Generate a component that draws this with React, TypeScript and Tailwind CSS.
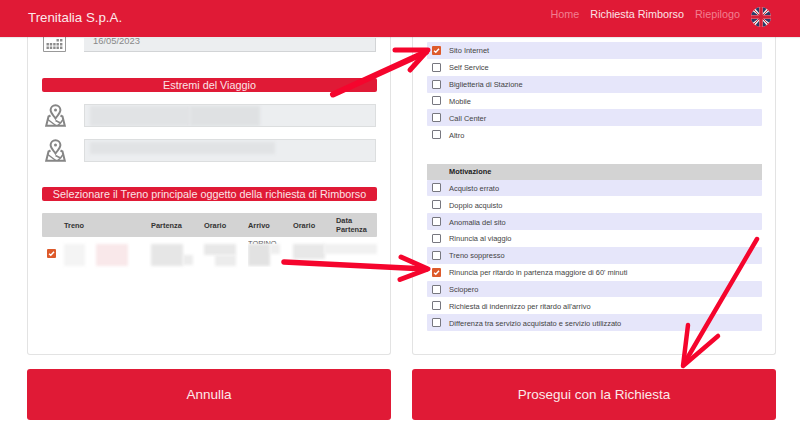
const channels = [
  { label: 'Sito Internet', checked: true },
  { label: 'Self Service' },
  { label: 'Biglietteria di Stazione' },
  { label: 'Mobile' },
  { label: 'Call Center' },
  { label: 'Altro' },
];

const reasons = [
  { label: 'Acquisto errato' },
  { label: 'Doppio acquisto' },
  { label: 'Anomalia del sito' },
  { label: 'Rinuncia al viaggio' },
  { label: 'Treno soppresso' },
  { label: "Rinuncia per ritardo in partenza maggiore di 60' minuti", checked: true },
  { label: 'Sciopero' },
  { label: "Richiesta di indennizzo per ritardo all'arrivo" },
  { label: 'Differenza tra servizio acquistato e servizio utilizzato' },
];

const Check = ({ checked }: { checked?: boolean }) =>
  checked ? (
    <span className="flex h-[9px] w-[9px] items-center justify-center rounded-[1px] bg-[#dd5a2b]">
      <svg viewBox="0 0 10 10" className="h-[7px] w-[7px]">
        <path d="M1.5 5.2 4 7.6 8.6 2.4" fill="none" stroke="#fff" strokeWidth="2" />
      </svg>
    </span>
  ) : (
    <span className="h-[9px] w-[9px] rounded-[1px] border border-[#77777f] bg-white" />
  );

const Row = ({ label, checked, odd }: { label: string; checked?: boolean; odd: boolean }) => (
  <div className={`flex h-[16.85px] items-center pl-[5px] ${odd ? 'rounded-[1px] bg-[#e6e6fa]' : ''}`}>
    <Check checked={checked} />
    <span className="ml-[8px] mt-[1px] text-[7.45px] text-[#444]">{label}</span>
  </div>
);

const Bar = ({ children }: { children: string }) => (
  <div className="flex h-[14px] items-center justify-center rounded-[2px] bg-[#e01a36] text-[10.8px] text-[#fbe3e6]">
    {children}
  </div>
);

const PinIcon = () => (
  <svg viewBox="0 0 21 23" className="h-[23px] w-[21px] shrink-0" fill="none" stroke="#868686" strokeWidth="2">
    <path d="M10.5 1.2a4.9 4.9 0 0 1 4.9 4.9c0 2.8-3 5.6-4.9 8.4-1.9-2.8-4.9-5.6-4.9-8.4a4.9 4.9 0 0 1 4.9-4.9Z" />
    <circle cx="10.5" cy="6" r="1.5" fill="#868686" stroke="none" />
    <path d="M5.5 11.5 3.5 12.5 1.2 21.8h18.6L17.5 12.5 15.5 11.5" />
    <path d="M2.8 15.5l8 6M10.5 16.5l5 2.5-3 2.8M18 15.5l-2.5 3.5" strokeWidth="1.5" />
  </svg>
);

const CalendarIcon = () => (
  <svg viewBox="0 0 23 15" className="h-[15px] w-[23px] shrink-0">
    <path d="M.5 0v14.5h22V0" fill="none" stroke="#999" />
    <path
      d="M13.5 2h2.4v2.4h-2.4zM17 2h2.4v2.4H17zM3.5 6h2.4v2.4H3.5zM6.8 6h2.4v2.4H6.8zM10.2 6h2.4v2.4h-2.4zM13.5 6h2.4v2.4h-2.4zM17 6h2.4v2.4H17zM3.5 9.6h2.4V12H3.5zM6.8 9.6h2.4V12H6.8zM10.2 9.6h2.4V12h-2.4zM13.5 9.6h2.4V12h-2.4zM17 9.6h2.4V12H17z"
      fill="#8c8c8c"
    />
  </svg>
);

const Flag = () => (
  <svg viewBox="0 0 20 20" className="h-[20px] w-[20px]">
    <clipPath id="flag-circle">
      <circle cx="10" cy="10" r="10" />
    </clipPath>
    <g clipPath="url(#flag-circle)">
      <rect width="20" height="20" fill="#eee" />
      <path d="M0 3 7 8H0zM3 0l5 6V0zM20 3l-7 5h7zM17 0l-5 6V0zM0 17l7-5H0zM3 20l5-6v6zM20 17l-7-5h7zM17 20l-5-6v6z" fill="#2b3a67" />
      <path d="M0 0l20 20M20 0 0 20" stroke="#c8283c" strokeWidth="1" />
      <path d="M10 0v20M0 10h20" stroke="#d31f37" strokeWidth="3.5" />
    </g>
  </svg>
);

const Blurred = ({ className }: { className: string }) => <div className={`blur-[1.5px] ${className}`} />;

export default function App() {
  return (
    <div className="relative flex h-[439px] w-[800px] flex-col overflow-hidden bg-white font-['Liberation_Sans',Arial,sans-serif]">
      <header className="z-10 flex h-[37px] shrink-0 bg-[#e01a36] pl-[28px] pr-[29px] shadow-[0_1px_1px_rgba(0,0,0,0.08)]">
        <span className="mt-[10px] text-[13.3px] leading-[16px] text-[#fbe9eb]">Trenitalia S.p.A.</span>
        <nav className="ml-auto mt-[7px] flex h-[14px] items-start gap-[11px] text-[10.8px] leading-[14px]">
          <span className="text-[#f27f90]">Home</span>
          <span className="text-[#fbe3e6]">Richiesta Rimborso</span>
          <span className="text-[#f27f90]">Riepilogo</span>
          <Flag />
        </nav>
      </header>

      <main className="grid h-[318px] shrink-0 grid-cols-[364px_364px] gap-[21px] pl-[27px]">
        <section className="overflow-hidden rounded-b-[3px] border border-t-0 border-[#e3e3e3] pl-[14px] pr-[13px]">
          <div className="flex h-[15px] items-end gap-[18px] pl-[1px]">
            <CalendarIcon />
            <div className="flex h-[14px] w-[292px] items-start overflow-hidden border-b border-r border-[#d2d4d6] bg-[#eceef0] pl-[9px] text-[9.4px] leading-none text-[#888]">
              <span className="-mt-[2px]">16/05/2023</span>
            </div>
          </div>

          <div className="mt-[26px]">
            <Bar>Estremi del Viaggio</Bar>
          </div>

          <div className="mt-[12px] flex items-center gap-[18px] pl-[3px]">
            <PinIcon />
            <div className="relative h-[23px] w-[292px] overflow-hidden border border-[#dcdedf] bg-[#eceef0]">
              <Blurred className="absolute left-[5px] top-[1px] h-[20px] w-[100px] bg-[#e1e3e5]" />
              <Blurred className="absolute left-[105px] top-[1px] h-[20px] w-[70px] bg-[#dfe1e3]" />
            </div>
          </div>
          <div className="mt-[12px] flex items-center gap-[18px] pl-[3px]">
            <PinIcon />
            <div className="relative h-[23px] w-[292px] overflow-hidden border border-[#dcdedf] bg-[#eceef0]">
              <Blurred className="absolute left-[5px] top-[2px] h-[12px] w-[185px] bg-[#e1e3e5]" />
            </div>
          </div>

          <div className="mt-[25px]">
            <Bar>Selezionare il Treno principale oggetto della richiesta di Rimborso</Bar>
          </div>

          <div className="mt-[12px] grid h-[24px] grid-cols-[22px_87px_53px_44px_45px_43px_41px] items-center rounded-[1px] bg-[#d3d3d3] text-[7.4px] font-bold leading-[9px] text-[#333]">
            <span />
            <span>Treno</span>
            <span>Partenza</span>
            <span>Orario</span>
            <span>Arrivo</span>
            <span>Orario</span>
            <span>
              Data
              <br />
              Partenza
            </span>
          </div>

          <div className="grid h-[30px] grid-cols-[22px_87px_53px_44px_45px_43px_41px] pt-[7px]">
            <div className="pl-[5px] pt-[5px]">
              <Check checked />
            </div>
            <div className="flex gap-[11px]">
              <Blurred className="h-[22px] w-[21px] bg-[#f4f4f4]" />
              <Blurred className="h-[22px] w-[32px] bg-[#f9e8ea]" />
            </div>
            <div className="relative">
              <Blurred className="h-[22px] w-[32px] bg-[#e6e6e6]" />
              <Blurred className="absolute left-[32px] top-[11px] h-[10px] w-[10px] bg-[#ececec]" />
            </div>
            <div className="relative">
              <Blurred className="h-[11px] w-[32px] bg-[#e8e8e8]" />
              <Blurred className="ml-[11px] h-[11px] w-[21px] bg-[#ececec]" />
            </div>
            <div className="relative -mt-[3px] overflow-hidden text-[7.4px] leading-[5px] text-[#555]">
              <span className="block h-[3px] overflow-hidden">TORINO</span>
              <Blurred className="h-[22px] w-[22px] bg-[#e2e2e2]" />
              <Blurred className="absolute left-[22px] top-[3px] h-[10px] w-[10px] bg-[#eeeeee]" />
            </div>
            <div>
              <Blurred className="h-[15px] w-[32px] bg-[#e8e8e8]" />
            </div>
            <div>
              <Blurred className="-ml-[12px] h-[10px] w-[53px] bg-[#f1f1f1]" />
            </div>
          </div>
        </section>

        <section className="overflow-hidden rounded-b-[3px] border border-t-0 border-[#e3e3e3] pl-[14px] pr-[13px] pt-[5px]">
          {channels.map((item, i) => (
            <Row key={item.label} label={item.label} checked={item.checked} odd={i % 2 === 0} />
          ))}
          <div className="mt-[21px] flex h-[15.5px] items-center bg-[#d3d3d3] pl-[22px] text-[7.4px] font-bold text-[#222]">
            Motivazione
          </div>
          {reasons.map((item, i) => (
            <Row key={item.label} label={item.label} checked={item.checked} odd={i % 2 === 0} />
          ))}
        </section>
      </main>

      <div className="mt-[14px] grid h-[51px] shrink-0 grid-cols-[364px_364px] gap-[21px] pl-[27px]">
        <button className="rounded-[3px] bg-[#e01a36] pt-[1px] text-[13.5px] text-[#fbe9eb]">Annulla</button>
        <button className="rounded-[3px] bg-[#e01a36] pt-[1px] text-[13.5px] text-[#fbe9eb]">Prosegui con la Richiesta</button>
      </div>

      {/* frecce disegnate sopra lo screenshot */}
      <svg viewBox="0 0 800 439" className="pointer-events-none absolute inset-0 z-20 h-[439px] w-[800px]" fill="none" stroke="#f5052d" strokeLinecap="round" strokeLinejoin="round">
        <path d="M333 94.5 426 52" strokeWidth="6" />
        <path d="M395 50h33L410 70" strokeWidth="5" />
        <path d="M284 262 426 269" strokeWidth="5.5" />
        <path d="M401 257l27 12-28 10.5" strokeWidth="5" />
        <path d="M757 239 685 362" strokeWidth="4.5" />
        <path d="M688 325l-5 41 35-30" strokeWidth="4.5" />
      </svg>
    </div>
  );
}
